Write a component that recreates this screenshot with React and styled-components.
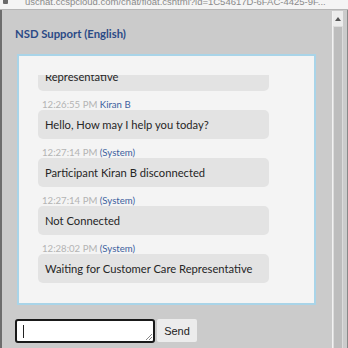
import React from "react";
import styled, { createGlobalStyle } from "styled-components";

const Global = createGlobalStyle`
  html, body { margin: 0; padding: 0; width: 348px; height: 348px; overflow: hidden; background: #cbcbcb; }
  * { box-sizing: border-box; }
`;

const Window = styled.div`
  width: 348px;
  height: 348px;
  display: flex;
  flex-direction: column;
  background: #cbcbcb;
  font-family: Lato, "Noto Sans", sans-serif;
`;

const AddressBar = styled.div`
  height: 10px;
  flex: none;
  display: flex;
  align-items: flex-end;
  gap: 17px;
  padding-left: 3px;
  background: #f4f4f4;
  border-bottom: 1px solid #b5b5b5;
  overflow: hidden;
`;

const Lock = styled.span`
  width: 5px;
  height: 5px;
  margin-bottom: 5px;
  background: #6a6a6a;
  border-radius: 1px;
  flex: none;
`;

const Url = styled.span`
  font-family: "Liberation Sans", Arial, sans-serif;
  font-size: 9.5px;
  line-height: 10px;
  color: #8a8a8a;
  white-space: nowrap;
  margin-bottom: 2px;
`;

const Body = styled.div`
  flex: 1;
  display: flex;
  border-left: 2px solid #6d6d6d;
  min-height: 0;
`;

const Content = styled.div`
  flex: 1;
  display: flex;
  flex-direction: column;
  padding: 0 0 0 13px;
`;

const Title = styled.h1`
  margin: 17px 0 0;
  font-size: 11.3px;
  line-height: 14px;
  font-weight: 700;
  color: #2b4a86;
`;

const Panel = styled.div`
  margin: 13px 0 0 2px;
  width: 299px;
  height: 251px;
  border: 2px solid #a9d4e8;
  background: #f4f4f4;
  padding: 19px 0 20px 19px;
  display: flex;
`;

const Messages = styled.div`
  flex: 1;
  overflow: hidden;
  display: flex;
  flex-direction: column;
  justify-content: flex-end;
`;

const Group = styled.div`
  flex: none;
  display: flex;
  flex-direction: column;
  margin-top: 8px;
`;

const Meta = styled.div`
  font-size: 9.6px;
  line-height: 11px;
  padding-left: 4px;
  white-space: nowrap;
`;

const Time = styled.span`
  color: #b3b3b3;
`;

const Sender = styled.span`
  color: #3d5f9e;
`;

const Bubble = styled.div`
  width: 231px;
  height: 29px;
  line-height: 29px;
  padding: 0 7px;
  background: #e3e3e3;
  border-radius: 5px;
  font-size: 11.2px;
  color: #262626;
  white-space: nowrap;
`;

const InputRow = styled.div`
  display: flex;
  gap: 2px;
  margin-top: 14px;
`;

const TextBox = styled.div`
  position: relative;
  width: 140px;
  height: 24px;
  background: #fff;
  border: 2px solid #1a1a1a;
  border-radius: 3px;
`;

const Caret = styled.span`
  position: absolute;
  left: 6px;
  top: 4px;
  width: 1px;
  height: 13px;
  background: #222;
`;

const Grip = styled.svg`
  position: absolute;
  right: 1px;
  bottom: 1px;
`;

const SendButton = styled.button`
  width: 40px;
  height: 23px;
  border: none;
  border-radius: 2px;
  background: #ececec;
  font-family: "Liberation Sans", Arial, sans-serif;
  font-size: 11px;
  color: #222;
  padding: 0;
`;

const Scrollbar = styled.div`
  width: 18px;
  flex: none;
  display: flex;
  padding: 1px 4px 0 2px;
  border-right: 1px solid #888;
`;

const Track = styled.div`
  flex: 1;
  display: flex;
  flex-direction: column;
  background: #dcdcdc;
  border-left: 1px solid #f2f2f2;
`;

const Arrow = styled.div`
  height: 15px;
  display: flex;
  align-items: center;
  justify-content: center;
  background: #ececec;
`;

const Thumb = styled.div`
  flex: 1;
  margin: 1px 1px 0 1px;
  background: #bdbdbd;
`;

const messages = [
  { time: "12:26:55 PM", who: "Kiran B", text: "Hello, How may I help you today?" },
  { time: "12:27:14 PM", who: "(System)", text: "Participant Kiran B disconnected" },
  { time: "12:27:14 PM", who: "(System)", text: "Not Connected" },
  { time: "12:28:02 PM", who: "(System)", text: "Waiting for Customer Care Representative" },
];

export default function App() {
  return (
    <>
      <Global />
      <Window>
        <AddressBar>
          <Lock />
          <Url>uschat.ccspcloud.com/chat/float.cshtml?id=1C54617D-6FAC-4425-9F...</Url>
        </AddressBar>
        <Body>
          <Content>
            <Title>NSD Support (English)</Title>
            <Panel>
              <Messages>
                <Group>
                  <Bubble>Representative</Bubble>
                </Group>
                {messages.map((m, i) => (
                  <Group key={i}>
                    <Meta>
                      <Time>{m.time}</Time> <Sender>{m.who}</Sender>
                    </Meta>
                    <Bubble>{m.text}</Bubble>
                  </Group>
                ))}
              </Messages>
            </Panel>
            <InputRow>
              <TextBox>
                <Caret />
                <Grip width="6" height="6" viewBox="0 0 6 6">
                  <path d="M6 0L0 6M6 3L3 6" stroke="#888" strokeWidth="1" />
                </Grip>
              </TextBox>
              <SendButton>Send</SendButton>
            </InputRow>
          </Content>
          <Scrollbar>
            <Track>
              <Arrow>
                <svg width="6" height="4" viewBox="0 0 6 4">
                  <path d="M3 0L6 4H0Z" fill="#555" />
                </svg>
              </Arrow>
              <Thumb />
            </Track>
          </Scrollbar>
        </Body>
      </Window>
    </>
  );
}
